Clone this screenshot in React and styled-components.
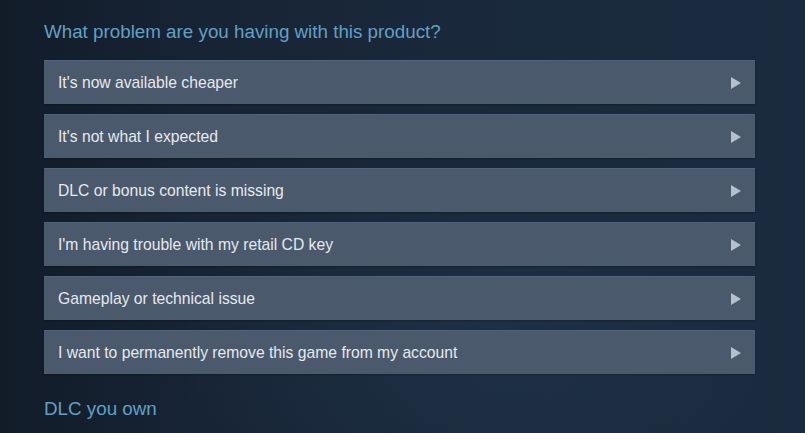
import React from 'react';
import styled, { createGlobalStyle } from 'styled-components';

const GlobalStyle = createGlobalStyle`
    html, body {
        margin: 0;
        padding: 0;
    }
    body {
        background: #17243a;
        font-family: "Liberation Sans", Arial, sans-serif;
    }
`;

const problems = [
    "It's now available cheaper",
    "It's not what I expected",
    'DLC or bonus content is missing',
    "I'm having trouble with my retail CD key",
    'Gameplay or technical issue',
    'I want to permanently remove this game from my account',
];

function App() {
    return (
        <>
            <GlobalStyle />
            <Page>
                <Section>
                    <SectionTitle>What problem are you having with this product?</SectionTitle>
                    <OptionList>
                        {problems.map((label) => (
                            <OptionRow key={label}>
                                <span>{label}</span>
                                <Arrow viewBox="0 0 10 12">
                                    <path d="M0 0 L10 6 L0 12 Z" />
                                </Arrow>
                            </OptionRow>
                        ))}
                    </OptionList>
                </Section>
                <SectionTitle>DLC you own</SectionTitle>
            </Page>
        </>
    );
}

const Page = styled.div`
    width: 805px;
    height: 433px;
    box-sizing: border-box;
    padding: 20px 50px 0 44px;
    overflow: hidden;
    background:
        radial-gradient(ellipse 55% 60% at 60% 80%, rgba(36, 58, 82, 0.45), rgba(36, 58, 82, 0) 70%),
        linear-gradient(90deg, #121c29 0%, #172435 25%, #1a2a3d 70%, #1b2b3f 100%);
`;

const Section = styled.div`
    margin-bottom: 23px;
`;

const SectionTitle = styled.div`
    font-size: 18.8px;
    line-height: 24px;
    color: #62a0c3;
`;

const OptionList = styled.div`
    margin-top: 16px;
    display: flex;
    flex-direction: column;
    gap: 10px;
`;

const OptionRow = styled.div`
    height: 44px;
    box-sizing: border-box;
    display: flex;
    align-items: center;
    justify-content: space-between;
    padding: 0 14px;
    background: #4a596c;
    border-top: 1px solid #52627a;
    color: #e6e9ec;
    font-size: 15.7px;
    box-shadow: 0 1px 2px rgba(0, 0, 0, 0.25);
`;

const Arrow = styled.svg`
    width: 10px;
    height: 12px;
    fill: #b5c0cc;
`;

export default App;
